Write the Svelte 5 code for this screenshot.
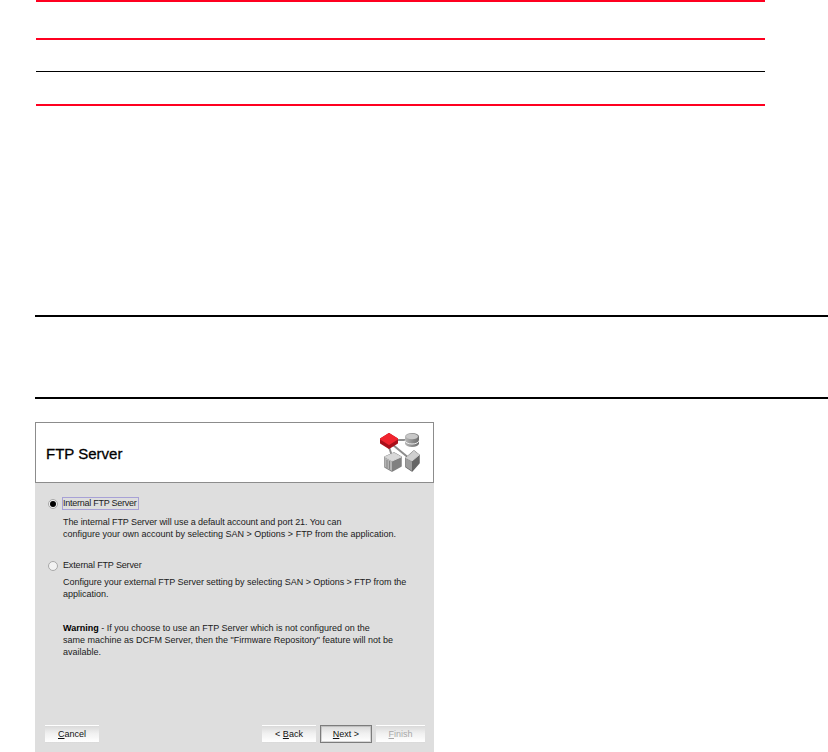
<script>
  const buttons = [
    { pre: '< ', key: 'B', rest: 'ack', cls: 'back' },
    { pre: '', key: 'N', rest: 'ext >', cls: 'default' },
    { pre: '', key: 'F', rest: 'inish', cls: 'disabled' }
  ];
</script>

<div class="page">
  <div class="rules">
    <hr class="red" />
    <hr class="red second" />
    <hr class="thin" />
    <hr class="red fourth" />
  </div>

  <div class="table-rules">
    <hr class="heavy" />
    <hr class="heavy lower" />
  </div>

  <section class="wizard">
    <header class="head">
      <h1>FTP Server</h1>
      <svg class="logo" width="41" height="41" viewBox="0 0 41 41">
        <defs>
          <linearGradient id="can" x1="0" x2="1" y1="0" y2="0">
            <stop offset="0" stop-color="#b8b8b8" />
            <stop offset="0.5" stop-color="#8e8e8e" />
            <stop offset="1" stop-color="#6e6e6e" />
          </linearGradient>
        </defs>
        <!-- links -->
        <g stroke="#8c8c8c" stroke-width="2" fill="none">
          <path d="M17 8 H26" />
          <path d="M9 15 L12 24" />
          <path d="M13 13 L30 27" />
        </g>
        <!-- database -->
        <path d="M25 4.5 a7 3.5 0 0 1 14 0 v7 a7 3.5 0 0 1 -14 0 z" fill="url(#can)" />
        <ellipse cx="32" cy="4.5" rx="6" ry="2.8" fill="#c8c8c8" />
        <path d="M25 8.5 a7 3.5 0 0 0 14 0" stroke="#ececec" fill="none" />
        <!-- red node -->
        <path d="M1 7 L9 2 L17 7 V11 L9 16 L1 11 z" fill="#a8101a" stroke="#a8101a" stroke-width="2" stroke-linejoin="round" />
        <path d="M1 7 L9 2 L17 7 L9 12 z" fill="#f0242f" stroke="#f0242f" stroke-width="2" stroke-linejoin="round" />
        <!-- left box -->
        <path d="M5 25 L14 21 L21 25 V34 L12 39 L5 35 z" fill="#808080" stroke="#808080" stroke-width="1.5" stroke-linejoin="round" />
        <path d="M5 25 L14 21 L21 25 L12 29 z" fill="#d8d8d8" stroke="#d8d8d8" stroke-linejoin="round" />
        <path d="M5 25.5 L12 29.5 V39 L5 35 z" fill="#b4b4b4" />
        <path d="M7 28 V36 M9.5 29 V37.5" stroke="#858585" />
        <!-- right box -->
        <path d="M26 26 L34 19 L39 23 V31 L32 39 L26 35 z" fill="#666" stroke="#666" stroke-width="1.5" stroke-linejoin="round" />
        <path d="M26 26 L34 19 L39 23 L32 29 z" fill="#cfcfcf" stroke="#cfcfcf" stroke-linejoin="round" />
        <path d="M26 26.5 L32 29.5 V39 L26 35 z" fill="#9c9c9c" />
      </svg>
    </header>

    <div class="body">
      <div class="option first">
        <span class="radio checked"></span>
        <span class="label focused">Internal FTP Server</span>
      </div>
      <p class="desc gap-a">
        <span class="tight">The internal FTP Server will use a default account and port 21. You can</span><br />
        configure your own account by selecting SAN &gt; Options &gt; FTP from the application.
      </p>

      <div class="option second-opt">
        <span class="radio"></span>
        <span class="label external">External FTP Server</span>
      </div>
      <p class="desc gap-b">
        <span class="snug">Configure your external FTP Server setting by selecting SAN &gt; Options &gt; FTP from the</span><br />
        application.
      </p>

      <p class="desc warning">
        <b>Warning</b> - If you choose to use an FTP Server which is not configured on the<br />
        same machine as DCFM Server, then the "Firmware Repository" feature will not be<br />
        available.
      </p>

      <div class="actions">
        <button class="btn cancel"><u>C</u>ancel</button>
        <div class="nav">
          {#each buttons as b}
            <button class="btn {b.cls}">{b.pre}<u>{b.key}</u>{b.rest}</button>
          {/each}
        </div>
      </div>
    </div>
  </section>
</div>

<style>
  :global(body) {
    margin: 0;
    background: #fff;
  }

  .page {
    width: 828px;
    height: 752px;
    overflow: hidden;
    font-family: "Liberation Sans", Arial, sans-serif;
  }

  hr {
    border: 0;
    margin: 0;
    display: block;
  }

  .rules {
    padding: 0 63px 0 36px;
  }

  .red {
    height: 2px;
    background: #ff0020;
  }

  .thin {
    height: 1px;
    background: #000;
    margin-top: 31px;
  }

  .second {
    margin-top: 36px;
  }

  .fourth {
    margin-top: 32px;
  }

  .table-rules {
    padding-left: 35px;
    margin-top: 209px;
  }

  .heavy {
    height: 2px;
    background: #000;
  }

  .lower {
    margin-top: 80px;
  }

  .wizard {
    width: 399px;
    height: 330px;
    margin: 23px 0 0 35px;
    background: #dedede;
  }

  .head {
    height: 61px;
    box-sizing: border-box;
    background: #fff;
    border: 1px solid #8c8c8c;
    display: flex;
    align-items: center;
    justify-content: space-between;
    padding: 0 12px 0 10px;
  }

  h1 {
    margin: 0;
    font-size: 15px;
    font-weight: 400;
    color: #000;
    -webkit-text-stroke: 0.3px #000;
    padding-top: 1px;
  }

  .logo {
    display: block;
    filter: blur(0.35px);
  }

  .body {
    height: 269px;
    box-sizing: border-box;
    padding: 14px 9px 0 10px;
    display: flex;
    flex-direction: column;
    font-size: 9px;
    line-height: 12px;
    color: #1a1a1a;
  }

  .option {
    display: flex;
    align-items: center;
    height: 13px;
    padding-left: 3px;
  }

  .radio {
    width: 8px;
    height: 8px;
    border-radius: 50%;
    background: #f2f2f2;
    border: 1px solid #a8a8a8;
    display: flex;
    align-items: center;
    justify-content: center;
    flex: none;
  }

  .radio.checked::after {
    content: "";
    width: 6px;
    height: 6px;
    border-radius: 50%;
    background: #000;
  }

  .label {
    margin-left: 4px;
    padding: 0 1px 0 0;
    border: 1px solid transparent;
    line-height: 11px;
    white-space: nowrap;
    letter-spacing: -0.25px;
  }

  .label.external {
    letter-spacing: -0.15px;
  }

  .label.focused {
    border-color: #a7a1d6;
  }

  .desc {
    margin: 0 0 0 18px;
    white-space: nowrap;
  }

  .tight {
    letter-spacing: -0.08px;
  }

  .snug {
    letter-spacing: -0.03px;
  }

  .gap-a {
    margin-top: 6px;
  }

  .second-opt {
    margin-top: 19px;
  }

  .gap-b {
    margin-top: 4px;
  }

  .warning {
    margin-top: 22px;
  }

  .warning b {
    color: #000;
  }

  .actions {
    margin-top: auto;
    margin-bottom: 9px;
    display: flex;
    justify-content: space-between;
  }

  .nav {
    display: flex;
    gap: 4px;
  }

  .btn {
    width: 52px;
    height: 18px;
    padding: 0;
    box-sizing: border-box;
    border: 1px solid transparent;
    background: linear-gradient(#d9d9d9, #f0f0f0 45%, #ffffff);
    font: 9px "Liberation Sans", Arial, sans-serif;
    color: #111;
  }

  .cancel,
  .back {
    width: 54px;
  }

  .default {
    border: 1px solid #7c7c7c;
    box-shadow: inset 0 0 0 1px rgba(128, 128, 128, 0.3);
  }

  .disabled {
    width: 49px;
    color: #a8a8a8;
  }
</style>
